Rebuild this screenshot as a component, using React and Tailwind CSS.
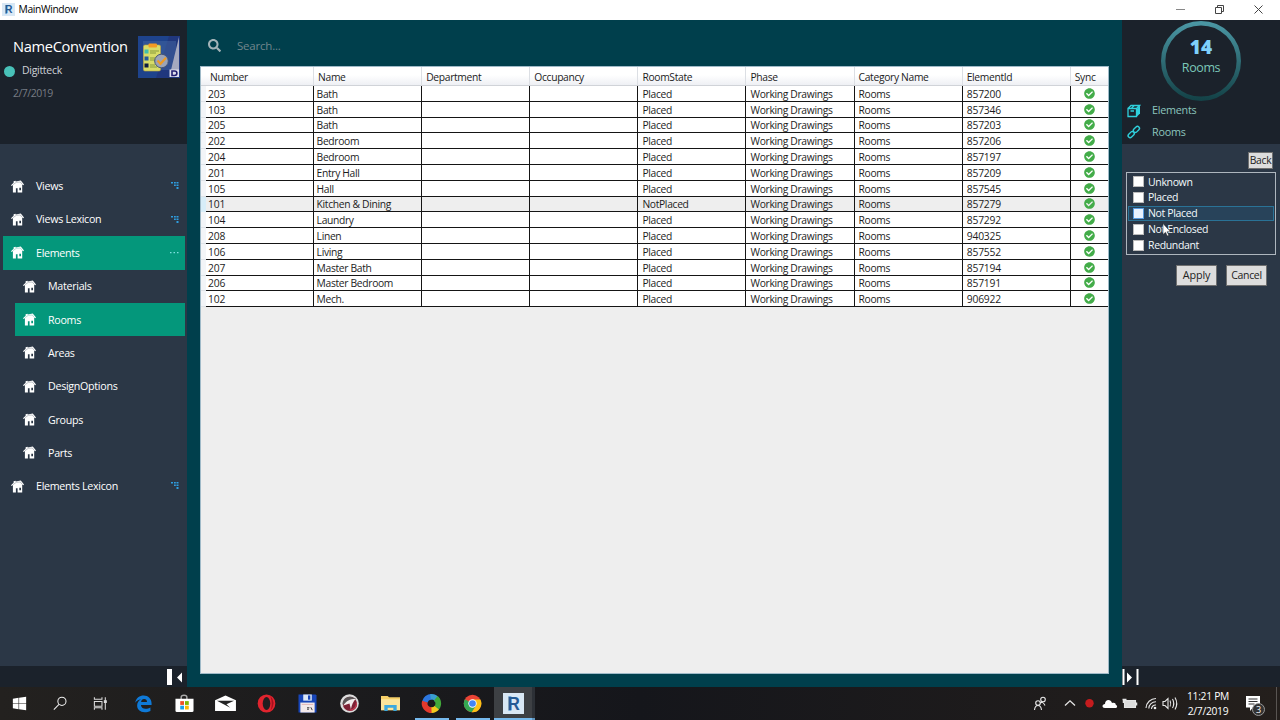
import React from "react";
import { FaSearch, FaCheckCircle } from "react-icons/fa";

const columns = ["Number", "Name", "Department", "Occupancy", "RoomState", "Phase", "Category Name", "ElementId"];

const cellStyles = [
    "pl-[2px] tracking-[-0.1px]",
    "pl-[2.5px]",
    "",
    "",
    "pl-[4px]",
    "pl-[4px]",
    "pl-[4px]",
    "pl-[4px] tracking-[-0.15px]",
];

const rooms = [
    ["203", "Bath", "Placed", "857200"],
    ["103", "Bath", "Placed", "857346"],
    ["205", "Bath", "Placed", "857203"],
    ["202", "Bedroom", "Placed", "857206"],
    ["204", "Bedroom", "Placed", "857197"],
    ["201", "Entry Hall", "Placed", "857209"],
    ["105", "Hall", "Placed", "857545"],
    ["101", "Kitchen & Dining", "NotPlaced", "857279"],
    ["104", "Laundry", "Placed", "857292"],
    ["208", "Linen", "Placed", "940325"],
    ["106", "Living", "Placed", "857552"],
    ["207", "Master Bath", "Placed", "857194"],
    ["206", "Master Bedroom", "Placed", "857191"],
    ["102", "Mech.", "Placed", "906922"],
];

const menu = [
    { label: "Views", mark: "closed" },
    { label: "Views Lexicon", mark: "closed" },
    { label: "Elements", mark: "open", active: true },
    { label: "Materials", child: true },
    { label: "Rooms", child: true, active: true },
    { label: "Areas", child: true },
    { label: "DesignOptions", child: true },
    { label: "Groups", child: true },
    { label: "Parts", child: true },
    { label: "Elements Lexicon", mark: "closed" },
];

const states = ["Unknown", "Placed", "Not Placed", "Not Enclosed", "Redundant"];

function HouseIcon({ hole }) {
    return (
        <svg className="w-[13px] h-[13px] shrink-0" viewBox="0 0 13 13" fill="#fff">
            <path d="M0 5.2L2.6 2.8V1.2l2-.4v.6L9.800.5 13 4.400l-.8.900-1-.9V12.500H6.600V8.300H4.900v4.200H1.900V5.100L.7 6z" />
            <path d="M8.300 7.700h1.700v2.600H8.300z" fill={hole} />
            <path d="M2 4.700L5.300 2.300 9.300 2l2 2.400" fill="none" stroke={hole} strokeWidth=".5" opacity=".6" />
        </svg>
    );
}

function Mark({ type }) {
    if (type === "open") {
        return (
            <svg className="w-[9px] h-[8px]" viewBox="0 0 9 8" fill="#7fe0df">
                <path d="M0 3h1.500v1.200H0zM3.500 3h1.500v1.200H3.500zM7 3h1.500v1.200H7z" />
            </svg>
        );
    }
    return (
        <svg className="w-[8px] h-[8px]" viewBox="0 0 8 8" fill="#2f9ee0">
            <path d="M0 0h2v1.500H0zM3 0h1.800v1.500H3zM5.500 0h2v1.500h-2zM3 2.400h1.800v1.500H3zM5.500 2.400h2v1.500h-2zM5.500 4.900h2v2h-2z" />
        </svg>
    );
}

function RevitIcon({ className }) {
    return (
        <svg className={className} viewBox="0 0 20 20">
            <rect width="20" height="20" fill="#d9e8f5" />
            <path d="M5 3h3v14H5z" fill="#6ba6d8" />
            <text x="4.5" y="16" fontSize="17" fontWeight="bold" fontFamily="Liberation Sans, sans-serif" fill="#245a94" textLength="11.5" lengthAdjust="spacingAndGlyphs">R</text>
        </svg>
    );
}

function TitleBar() {
    return (
        <div className="h-5 shrink-0 bg-white flex items-center justify-between">
            <div className="flex items-center pl-0.5 pb-px">
                <RevitIcon className="w-[13px] h-[13px]" />
                <span className="ml-[3.5px] text-[10.3px] leading-none tracking-[-0.35px] text-black">MainWindow</span>
            </div>
            <svg className="w-[110px] h-5" viewBox="0 0 110 20" fill="none" stroke="#444" strokeWidth="1">
                <path d="M6 9.5h9" stroke="#888" />
                <path d="M45.5 7.5h6v6h-6zM47.5 7.5v-2h6v6h-2" />
                <path d="M84.5 5.5l8 8M92.5 5.5l-8 8" />
            </svg>
        </div>
    );
}

function AppLogo() {
    return (
        <svg className="w-[42px] h-[42px] shrink-0" viewBox="0 0 42 42">
            <rect width="42" height="42" fill="#20377d" />
            <path d="M0 0h31L18 42H0z" fill="#1e438c" />
            <path d="M5 5h33v29H5z" fill="#4264a0" opacity=".55" />
            <path d="M41 1v36L33 34z" fill="#a5a9bf" />
            <rect x="5.5" y="9" width="17" height="26" rx="1.5" fill="#d8dc68" stroke="#c4a63b" strokeWidth=".6" />
            <rect x="10.5" y="7.5" width="8.5" height="4" rx="1" fill="#f39b24" />
            <path d="M6.5 13.5h4v4h-4z" fill="#3ec0ae" />
            <path d="M6.5 20.5h4v4h-4z" fill="#225a9c" />
            <path d="M6.5 27.5h4v4h-4z" fill="#101d40" />
            <path d="M12 15h9M12 17h6M12 22h5M12 24h5M12 29h5M12 31h7" stroke="#84993d" strokeWidth="1" />
            <circle cx="23.5" cy="25" r="6.8" fill="#9ca4b7" stroke="#465576" />
            <path d="M19.5 24.5l3 3.3 5.5-6" fill="none" stroke="#ed9a25" strokeWidth="2.2" />
            <path d="M31.5 33.500h9.500v7.500h-9.500z" fill="#dedfed" />
            <path d="M34 35h2.500c3.200 0 3.200 4.500 0 4.500H34z" fill="none" stroke="#211e70" strokeWidth="1.6" />
        </svg>
    );
}

function Sidebar() {
    return (
        <div className="w-[187px] shrink-0 flex flex-col bg-[#2b3746]">
            <div className="h-[124px] shrink-0 bg-[#1b222b] flex justify-between pr-[7px] pt-4">
                <div className="pl-1 -mt-px">
                    <div className="pl-[9px] text-[14.7px] leading-[22px] tracking-[-0.35px] text-white whitespace-nowrap">NameConvention</div>
                    <div className="mt-[4px] flex items-center h-5">
                        <span className="w-[11px] h-[11px] rounded-full bg-[#48c1b8]"></span>
                        <span className="ml-[7px] text-[10.5px] tracking-[-0.3px] text-[#cfd3d7]">Digitteck</span>
                    </div>
                    <div className="pl-[9px] mt-[3px] text-[10.5px] tracking-[-0.5px] leading-[18px] text-[#777d84]">2/7/2019</div>
                </div>
                <AppLogo />
            </div>
            <div className="flex-1 pt-[25.5px]">
                {menu.map((item) => (
                    <div key={item.label} className={item.child ? "h-[33.35px] pl-[15px] pr-0.5" : "h-[33.35px] pl-[3px] pr-0.5"}>
                        <div className={item.active ? "h-full flex items-center pl-2 pr-1.5 bg-[#04977b]" : "h-full flex items-center pl-2 pr-1.5"}>
                            <HouseIcon hole={item.active ? "#04977b" : "#2b3746"} />
                            <span className="flex-1 ml-3 text-[10.7px] tracking-[-0.3px] text-white whitespace-nowrap">{item.label}</span>
                            {item.mark && <Mark type={item.mark} />}
                        </div>
                    </div>
                ))}
            </div>
            <div className="h-[21px] bg-[#1b222b]">
                <svg className="w-[187px] h-[21px]" viewBox="0 0 187 21" fill="#fff">
                    <path d="M167 3h5v16h-5zM177 11.5l5-5v10z" />
                </svg>
            </div>
        </div>
    );
}

function RoomGrid() {
    return (
        <div className="w-[909px] h-[608px] bg-[#eee] border border-[#9fbac8] text-[10.3px] tracking-[-0.33px] text-[#1c1c1c]">
            <div className="flex h-[19px] bg-linear-to-b from-white from-45% to-[#eef0f4] border-b border-[#d0d3d8]">
                <div className="w-[5px]"></div>
                {columns.map((name) => (
                    <div key={name} className="w-[108.1px] pl-1 pt-0.5 border-r border-[#dcdfe4] flex items-center leading-none whitespace-nowrap">{name}</div>
                ))}
                <div className="flex-1 pl-1 pt-0.5 flex items-center leading-none">Sync</div>
            </div>
            {rooms.map(([number, name, state, id]) => (
                <div key={number} className={number === "101" ? "flex h-[15.8px] bg-[#eee]" : "flex h-[15.8px] bg-white"}>
                    <div className={number === "101" ? "w-[5px] bg-[#d8edf8]" : "w-[5px] bg-[#f3f5f8] border-b border-[#dfe3e8]"}></div>
                    {[number, name, "", "", state, "Working Drawings", "Rooms", id].map((value, i) => (
                        <div key={i} className={"w-[108.1px] pt-px border-r border-b border-[#151515] flex items-center leading-none whitespace-nowrap " + cellStyles[i]}>{value}</div>
                    ))}
                    <div className="flex-1 border-b border-[#151515] flex items-center justify-center">
                        <FaCheckCircle size={11} className="text-[#43ac49]" />
                    </div>
                </div>
            ))}
        </div>
    );
}

function Cursor() {
    return (
        <svg className="absolute left-[35px] top-[50px] w-[9px] h-[14px]" viewBox="0 0 9 14">
            <path d="M1 0.5v11l2.6-2.3 1.6 3.8 1.6-.7-1.6-3.6h3.2z" fill="#fff" stroke="#222" strokeWidth=".5" />
        </svg>
    );
}

function InfoPanel() {
    return (
        <div className="w-[158px] shrink-0 flex flex-col bg-[#2b3746]">
            <div className="h-[124px] shrink-0 bg-[#1b222b]">
                <div className="relative w-20 h-20 ml-[39px] mt-[1px] flex flex-col items-center">
                    <svg className="absolute inset-0 w-20 h-20" viewBox="0 0 80 80">
                        <defs>
                            <linearGradient id="ring" x1="0" y1="0" x2="0" y2="1">
                                <stop offset="0" stopColor="#4a96a3" />
                                <stop offset="1" stopColor="#144348" />
                            </linearGradient>
                        </defs>
                        <circle cx="40" cy="40" r="37.8" fill="none" stroke="url(#ring)" strokeWidth="4.4" />
                    </svg>
                    <div className="mt-4 text-[19px] leading-5 font-extrabold text-[#7ed0fb]">14</div>
                    <div className="mt-px text-[12.5px] leading-5 tracking-[-0.4px] text-[#7cc7b9]">Rooms</div>
                </div>
                <div className="flex items-center h-[18px] pl-[5px] text-[10.8px] tracking-[-0.25px] text-[#8cc5bd]">
                    <svg className="w-[14px] h-[14px] mt-0.5" viewBox="0 0 14 14" fill="none" stroke="#2fd0dc" strokeWidth="1.3">
                        <path d="M1 4.500h8.500v8H1zM1 4.500L4 1.500h8.500L9.500 4.500" />
                        <path d="M10 4.500l3-3v8l-3 3z" fill="#2fd0dc" stroke="none" />
                        <path d="M3.500 7h3.500M4.500 4.500l2.500-3" />
                    </svg>
                    <span className="ml-[11px]">Elements</span>
                </div>
                <div className="flex items-center h-[18px] mt-1 pl-[5px] text-[10.8px] tracking-[-0.25px] text-[#8cc5bd]">
                    <svg className="w-[14px] h-[14px]" viewBox="0 0 14 14" fill="none" stroke="#2fd0dc" strokeWidth="1.4">
                        <rect x="-3.5" y="-2" width="7" height="4" rx="2" transform="translate(4.2 9.6) rotate(-45)" />
                        <rect x="-3.5" y="-2" width="7" height="4" rx="2" transform="translate(9.400 4.400) rotate(-45)" />
                    </svg>
                    <span className="ml-[11px]">Rooms</span>
                </div>
            </div>
            <div className="flex-1 flex flex-col px-1 pt-2">
                <button className="self-end mr-[3px] w-[25px] h-[17px] bg-[#ddd] border border-[#707070] text-[10.3px] leading-none tracking-[-0.3px] text-[#222]">Back</button>
                <div className="relative mt-[3px] h-[83px] border border-[#aeb6be] p-px pt-[1px]">
                    {states.map((state) => (
                        <div key={state} className={state === "Not Placed"
                            ? "h-[15.8px] pl-1 flex items-center border border-[#2a7296] bg-[#28435a]"
                            : "h-[15.8px] pl-[5px] flex items-center"}>
                            <span className={state === "Not Placed"
                                ? "w-[11px] h-[11px] bg-[#eaf3ff] border border-[#5a9ce0]"
                                : "w-[11px] h-[11px] bg-white border border-[#bbb]"}></span>
                            <span className="ml-1 text-[10.5px] leading-none tracking-[-0.35px] text-[#f4fafc]">{state}</span>
                        </div>
                    ))}
                    <Cursor />
                </div>
                <div className="flex justify-end gap-[9px] mt-[10px] pr-[9px]">
                    <button className="w-[41px] h-[21px] bg-[#ddd] border border-[#707070] text-[10.8px] leading-none tracking-[-0.1px] text-[#222]">Apply</button>
                    <button className="w-[41px] h-[21px] bg-[#ddd] border border-[#707070] text-[10.5px] leading-none tracking-[-0.3px] text-[#222]">Cancel</button>
                </div>
            </div>
            <div className="h-[21px] bg-[#1b222b]">
                <svg className="w-[20px] h-[21px]" viewBox="0 0 20 21" fill="#fff">
                    <path d="M0.5 3h2v16h-2zM5 6.5l5 5-5 5zM14.5 3h2v16h-2z" />
                </svg>
            </div>
        </div>
    );
}

const taskIcons = [
    <g fill="#fff"><path d="M3 5l6-1v5.7H3zM9.6 3.9L17 3v6.7H9.6zM3 10.3h6V16l-6-1zM9.6 10.3H17V17l-7.4-1z" /></g>,
    <g fill="none" stroke="#eee" strokeWidth="1.1"><circle cx="11.5" cy="7.7" r="4.3" /><path d="M8.4 10.9L3 16.4" /></g>,
    <g transform="translate(-1 0)" fill="none" stroke="#ddd" strokeWidth="1.1"><path d="M3.5 3.5v2h8v-2M3.5 7.8h8v5h-8zM3.5 16.5v-2h8v2M15 3.5v13" /><path d="M14 7h2v2h-2z" fill="#ddd" /></g>,
    <path d="M1.3 9.2C2.2 4 5.8 1.5 10.2 1.5c4.8 0 8.3 3.5 8.3 8.3v1.7H7.3c.3 3 2.4 3.9 4.8 3.9 2 0 3.7-.5 5.2-1.3v3.7c-1.8.9-3.8 1.4-6 1.4-5 0-8-3-8-7 0-3 1.7-5.3 4.2-6.600-3 .4-5 1.600-6.2 3.600zM7.500 8.400h6.200c0-2-1.100-3.200-3-3.200s-3 1.300-3.200 3.200z" fill="#0f7ad8" />,
    <g><path d="M6.5 6V3.5c0-3 6-3 6 0V6" fill="none" stroke="#aaa" strokeWidth="1.5" /><path d="M0.5 5h19v12.5q0 1.5-1.5 1.5H2q-1.5 0-1.5-1.5z" fill="#fff" /><path d="M5.5 7.5h4v4h-4z" fill="#ef5025" /><path d="M10.5 7.5h4v4h-4z" fill="#7eb801" /><path d="M5.5 12.3h4v4h-4z" fill="#1ba1e8" /><path d="M10.5 12.3h4v4h-4z" fill="#fdb904" /></g>,
    <g><path d="M-1 6.5l11-5 11 5v11.500H-1z" fill="#fff" /><path d="M1 7h18l-8 3.800 4 3.700z" fill="#222" /></g>,
    <g><ellipse cx="10" cy="10" rx="9.300" ry="9.500" fill="#e1242e" /><ellipse cx="10" cy="10" rx="4" ry="6.800" fill="#211e20" /><path d="M14 2q7 7 0 16 3-8 0-16z" fill="#a50f1d" /></g>,
    <g><path d="M0.500 0.500h18l1 1v18h-19z" fill="#1745b8" /><path d="M5.500 0.500h9v6.500h-9z" fill="#dce8f8" /><path d="M10.500 1.500h2.500v4.500h-2.500z" fill="#1745b8" /><path d="M2.500 9h15v10.500h-15z" fill="#f4eaea" /><path d="M4 11h12" stroke="#e3b5b5" /><path d="M9.500 14.500h2.500M9.500 16h2M13.500 14l1.500 3" stroke="#333" /></g>,
    <g><circle cx="10" cy="10" r="9.800" fill="#dcdcdc" /><circle cx="10.500" cy="10.500" r="7.500" fill="#7d2034" /><path d="M2.500 11C3 5 7 2.500 12 3l5 2-6 2.500z" fill="#5a5456" /><path d="M3.500 12C7 7 10 5.500 16.500 5 14 8 12.500 11 11.500 16L10 10z" fill="#f1ecec" /><path d="M10 17A7 7 0 0 0 17.300 9" fill="none" stroke="#c23a50" strokeWidth="1.300" /></g>,
    <g><path d="M0 2h7l1.500 1.500H20V17H0z" fill="#f5cf68" /><path d="M0 5.500h20V17H0z" fill="#fce59b" /><path d="M3.500 18v-6.500h13V18H13v-3.500H7V18z" fill="#3ba9df" /></g>,
    <g fill="none" strokeWidth="6"><path d="M3 8.500A7 7 0 0 1 10 3" stroke="#2c77df" /><path d="M9 3A7 7 0 0 1 16.500 7.500" stroke="#3a9fd0" /><path d="M14.500 4.500A7 7 0 0 1 14.700 15.300" stroke="#42a93a" /><path d="M15.500 14.500A7 7 0 0 1 8.500 16.800" stroke="#f4c91d" /><path d="M10 17A7 7 0 0 1 3 8" stroke="#e3392d" /></g>,
    <g><circle cx="10" cy="10" r="9.200" fill="#ea4335" /><path d="M10 10L2 5.500A9.200 9.200 0 0 0 9.200 19.200L14 12.300z" fill="#34a853" /><path d="M10 5.800h8.300A9.200 9.200 0 0 1 9.200 19.200L13.800 12z" fill="#fbc116" /><circle cx="10" cy="10" r="4.400" fill="#fff" /><circle cx="10" cy="10" r="3.500" fill="#4285f4" /></g>,
];

function Taskbar() {
    return (
        <div className="h-[33px] shrink-0 flex justify-between bg-linear-to-r from-[#23211f] via-[#15161b] to-[#241f1c]">
            <div className="flex">
                {taskIcons.map((icon, i) => (
                    <div key={i} className="relative w-[41.2px] pr-0.5 flex items-center justify-center">
                        <svg className="w-[19px] h-[19px]" viewBox="0 0 20 20" overflow="visible">{icon}</svg>
                        {i > 9 && <span className="absolute bottom-0 left-[3px] w-[34px] h-0.5 bg-[#76b9ed]"></span>}
                    </div>
                ))}
                <div className="w-[38px] flex items-center justify-center bg-[#3d4044] border-b-2 border-[#76b9ed] pt-0.5 pl-px">
                    <RevitIcon className="w-[21px] h-[21px]" />
                </div>
                <div className="w-[3px] bg-[#2c3036] border-b-2 border-[#5d93bd]"></div>
            </div>
            <div className="flex text-white">
                <svg className="w-[155px] h-[33px]" viewBox="1029 0 155 33" fill="none" stroke="#e6e6e6" strokeWidth="1.1">
                    <circle cx="1043" cy="12.5" r="2.3" />
                    <circle cx="1038" cy="16" r="2.3" />
                    <path d="M1034.5 23q.5-4.500 3.500-4.500t3.500 4.500M1040 16q3-2 5 2.500" />
                    <path d="M1065 18.500l5-4.700 5 4.700" strokeWidth="1.3" />
                    <circle cx="1089.5" cy="16.3" r="4.2" fill="#c51c1e" stroke="none" />
                    <path d="M1106 21h-1c-3.500 0-3-4 0-4 0-5 6-5 7-1 3-.8 4 .800 3.800 2 2 .2 1.500 3 0 3z" fill="#fff" stroke="none" />
                    <path d="M1124.500 13.500h11v7h-11z" fill="#ddd" />
                    <path d="M1136.500 15.500v3M1122.500 12.500h4M1123.500 12v4" strokeWidth="1.5" />
                    <path d="M1146 21A10 10 0 0 1 1156 11.500M1148.800 21.500A7 7 0 0 1 1156 14.700M1151.500 22A4 4 0 0 1 1156 18" />
                    <circle cx="1155" cy="21" r="1.3" fill="#eee" stroke="none" />
                    <path d="M1163 14.500h2l3-3v10l-3-3h-2zM1170 13.500q1.500 3 0 6M1172.500 12q2.500 4.500 0 9M1175 10.500q3.500 6 0 12" />
                </svg>
                <div className="w-[48px] pt-[2px] flex flex-col items-center text-[10.3px] leading-[15px] tracking-[-0.3px] whitespace-nowrap">
                    <span>11:21 PM</span>
                    <span>2/7/2019</span>
                </div>
                <div className="relative w-[48px]">
                    <svg className="absolute left-[14px] top-[9px] w-[14px] h-[15px]" viewBox="0 0 14 15">
                        <path d="M0 0h14v11.500H7L4 15v-3.500H0z" fill="#fff" />
                        <path d="M2.500 3h9M2.500 5.500h9M2.500 8h6" stroke="#333" />
                    </svg>
                    <span className="absolute left-[20px] top-[16px] w-[13px] h-[13px] rounded-full bg-[#333] border border-[#999] text-[9px] leading-[11px] text-center">3</span>
                    <span className="absolute right-[3px] inset-y-0 w-px bg-[#595552]"></span>
                </div>
            </div>
        </div>
    );
}

export default function App() {
    return (
        <div className="w-[1280px] h-[720px] flex flex-col overflow-hidden font-['Open_Sans','Noto_Sans',sans-serif]">
            <TitleBar />
            <div className="flex-1 min-h-0 flex">
                <Sidebar />
                <div className="flex-1 bg-[#003f4c] pl-[13px] pr-[13px]">
                    <div className="flex items-center h-[46px] pl-2 pt-1">
                        <FaSearch size={13} className="text-[#a3b3b8]" />
                        <span className="ml-4 mt-px text-[11.5px] tracking-[-0.2px] text-[#71868c]">Search...</span>
                    </div>
                    <RoomGrid />
                </div>
                <InfoPanel />
            </div>
            <Taskbar />
        </div>
    );
}
